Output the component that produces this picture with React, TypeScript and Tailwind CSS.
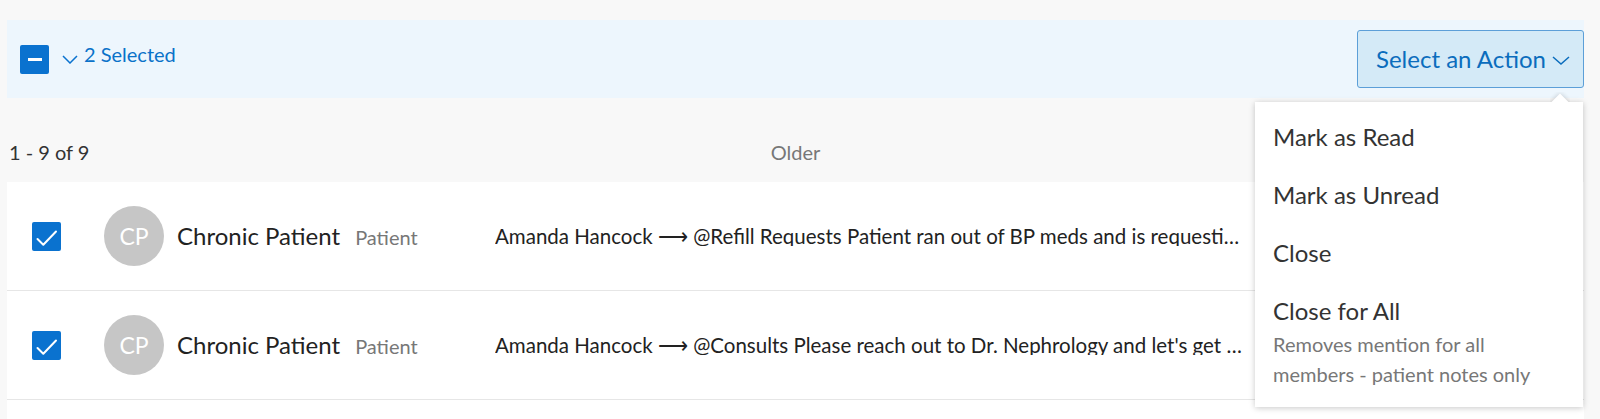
import React from "react";

function CheckedBox() {
  return (
    <div className="w-[29px] h-[29px] rounded-[2px] bg-[#0a72cf] flex items-center justify-center shrink-0">
      <svg width="29" height="29" viewBox="0 0 29 29" fill="none">
        <path d="M5.5 17 L11.3 22.8 L24 9.5" stroke="white" strokeWidth="2" strokeLinecap="round" strokeLinejoin="round" />
      </svg>
    </div>
  );
}

function Row({ msg }: { msg: string }) {
  return (
    <div className="h-[109px] border-b border-[#e6e6e6] flex items-center pl-[25px]">
      <CheckedBox />
      <div className="ml-[43px] w-[391px] flex items-center shrink-0">
        <div className="w-[60px] h-[60px] rounded-full bg-[#c6c6c6] flex items-center justify-center text-white text-[23px] leading-none shrink-0">
          CP
        </div>
        <div className="ml-[13px] flex items-baseline">
          <span className="text-[24px] text-[#222] leading-none">Chronic Patient</span>
          <span className="ml-[15px] text-[20px] text-[#777] leading-none">Patient</span>
        </div>
      </div>
      <div className="w-[760px] whitespace-nowrap overflow-hidden text-[20.5px] text-[#222] leading-none">
        {msg}
      </div>
    </div>
  );
}

export default function App() {
  return (
    <div className="w-[1600px] h-[419px] overflow-hidden bg-[#f8f8f8] font-[Lato,sans-serif] pt-[20px] pl-[7px]">
      <div className="w-[1577px]">
        <div className="relative">
          <div className="h-[78px] bg-[#edf6fd] flex items-center justify-between pl-[13px]">
            <div className="flex items-center">
              <div className="w-[29px] h-[29px] rounded-[2px] bg-[#0a72cf] flex items-center justify-center">
                <div className="w-[14px] h-[3px] bg-white" />
              </div>
              <svg className="ml-[13px] mt-[1px]" width="16" height="9" viewBox="0 0 16 9" fill="none">
                <path d="M1 1 L8 8 L15 1" stroke="#0a72cf" strokeWidth="1.5" />
              </svg>
              <span className="ml-[6px] mb-[10px] text-[20px] text-[#0a72c9] leading-none">2 Selected</span>
            </div>
            <button className="h-[58px] w-[227px] bg-[#d4eaf7] border border-[#5c9fd8] rounded-[3px] flex items-center pl-[18px] text-[#0b6dbd] text-[24px] leading-none">
              <span>Select an Action</span>
              <svg className="ml-[6px] mt-[2px]" width="18" height="9" viewBox="0 0 18 9" fill="none">
                <path d="M1 1 L9 8 L17 1" stroke="#0b6dbd" strokeWidth="1.5" />
              </svg>
            </button>
          </div>
          <div className="absolute right-[1px] top-[82px] w-[328px] bg-white shadow-[0_1px_6px_rgba(0,0,0,0.22)] pt-[6px] pb-[4px] z-10">
            <div className="absolute right-[13px] top-[-10px] w-[20px] h-[10px] overflow-hidden">
              <div className="absolute left-[4px] top-[4px] w-[12px] h-[12px] bg-white rotate-45 shadow-[0_0_5px_rgba(0,0,0,0.2)]" />
            </div>
            <div className="pl-[18px] text-[24px] text-[#333] leading-[30px]">
              <div className="py-[14px]">Mark as Read</div>
              <div className="py-[14px]">Mark as Unread</div>
              <div className="py-[14px]">Close</div>
              <div className="pt-[14px] pb-[14px]">
                <div>Close for All</div>
                <div className="mt-[3px] text-[20px] text-[#777] leading-[30px]">
                  Removes mention for all
                  <br />
                  members - patient notes only
                </div>
              </div>
            </div>
          </div>
        </div>
        <div className="h-[84px] relative pt-[42px] text-[20px] leading-[24px]">
          <span className="ml-[2px] text-[#333]">1 - 9 of 9</span>
          <span className="absolute left-0 right-0 top-[42px] text-center text-[#777]">Older</span>
        </div>
        <div className="bg-white">
          <Row msg="Amanda Hancock ⟶ @Refill Requests Patient ran out of BP meds and is requesti…" />
          <Row msg="Amanda Hancock ⟶ @Consults Please reach out to Dr. Nephrology and let's get …" />
          <Row msg="" />
        </div>
      </div>
    </div>
  );
}
